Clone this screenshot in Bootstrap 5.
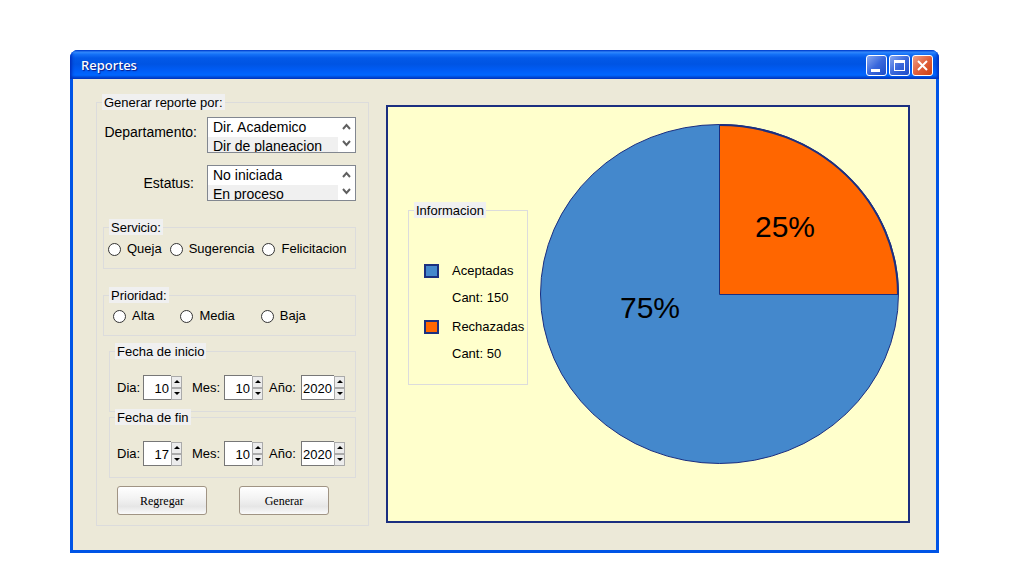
<!DOCTYPE html>
<html lang="es">
<head>
<meta charset="utf-8">
<meta name="viewport" content="width=device-width, initial-scale=1">
<title>Reportes</title>
<link href="https://cdn.jsdelivr.net/npm/bootstrap@5.3.0/dist/css/bootstrap.min.css" rel="stylesheet">
<style>
  body { background: #fff; color: #000; font: 13px/16px "Liberation Sans", Arial, sans-serif; }
  .desk { padding: 50px 79px 29px 70px; }

  .xp-window { background: #0054e6; border-radius: 8px 8px 0 0; overflow: hidden; }
  .xp-title {
    height: 29px; padding: 2px 6px 0 11px;
    background: linear-gradient(#0058e6 0, #3a93ff 2px, #1673f8 4px, #0359e8 8px, #0054e3 14px, #005cf5 20px, #0066ff 25px, #0054e0 27px, #0040c0 29px);
    box-shadow: inset 2px 0 3px #0030c0, inset -2px 0 3px #0030c0;
  }
  .xp-title h1 { padding-bottom: 2px; font: 500 13px/18px "Noto Sans", sans-serif; color: #fff; text-shadow: 1px 1px 1px #0a1883; }
  .xp-controls { gap: 2px; }
  .xp-btn { width: 21px; height: 21px; padding: 0; border: 1px solid #fff; border-radius: 3px; background: linear-gradient(135deg, #88a8f0, #3a68dc 50%, #1c4cc8); }
  .xp-close { background: linear-gradient(135deg, #f0a088, #e0603c 50%, #d04010); }
  .xp-btn svg { display: block; }
  .xp-body { margin: 0 3px 3px; padding: 15px 26px 24px 23px; gap: 17px; background: #ece9d8; }

  .group { min-width: 0; border: 1px solid #dcdcdc; }
  .group > legend { float: none; width: auto; margin: 0 0 0 5px; padding: 2px 2px 0; font-size: 13px; line-height: 14px; background: #f0f0f0; }
  .filters { width: 273px; padding: 7px 0 10px; }
  .filters .group { margin: 0 12px 0 6px; }
  .filters .dates { margin-left: 12px; }
  .filters .service, .filters .priority { margin-top: 18px; }
  .filters .start { margin-top: 7px; }
  .filters .finish { margin-top: -3px; }

  .pick { gap: 10px; margin: 0 12px 12px 6px; font-size: 14px; line-height: 19px; }
  .pick label { width: 94px; padding-bottom: 6px; text-align: right; white-space: nowrap; }
  .pick + .pick { margin-bottom: 0; }
  .pick + .pick label { padding: 0 3px 0 0; }
  .listbox { height: 36px; border: 1px solid #828790; background: #fff; overflow: hidden; }
  .listbox select { height: 40px; border: 0; padding: 0; outline: 0; background: #fff; overflow: hidden; font-size: 14px; scrollbar-width: none; color: #000; }
  .listbox select::-webkit-scrollbar { display: none; }
  .listbox option { min-height: 19px; padding: 1px 5px 0; line-height: 18px; }
  .listbox option:nth-child(even) { background: #f0f0f0; }
  .scroller { width: 17px; }
  .scroller button { height: 17px; padding: 0; border: 0; background: none; line-height: 0; }

  .choices { align-items: flex-start; }
  .choice { gap: 6px; }
  .choice input { appearance: none; width: 13px; height: 13px; margin: 0; border: 1px solid #333; border-radius: 50%; background: #fff; }
  .service .choices { gap: 8px; height: 33px; padding: 6px 0 0 4px; }
  .priority .choices { gap: 26px; height: 32px; padding: 5px 0 0 9px; }

  .dates .fields { padding: 16px 0 11px 7px; }
  .dates label { width: 32px; white-space: nowrap; }
  .dates label:first-child { width: 26px; }
  .spin { height: 25px; margin-right: 6px; }
  .spin.day { margin-right: 10px; }
  .spin input { width: 28px; height: 25px; padding: 2px 2px 0 0; border: 1px solid #777; border-right: 0; border-radius: 0; text-align: right; font-size: 13px; background: #fff; color: #000; }
  .spin.year input { width: 33px; }
  .spin-keys { width: 11px; }
  .spin-keys button { display: flex; align-items: center; justify-content: center; height: 12px; padding: 0; border: 1px solid #aaa; background: #ececec; }

  .actions { gap: 32px; margin: 8px 0 0 20px; }
  .action-btn { width: 90px; height: 29px; padding: 0; border: 1px solid #a09484; border-radius: 3px; background: linear-gradient(#fff, #f2f2f2 45%, #e6e6e6 72%, #fafafa); font: 12px/16px "Liberation Serif", serif; color: #000; }

  .chart-panel { min-width: 0; margin: 11px 0 3px; padding: 17px 9px 0 20px; gap: 12px; border: 2px solid #1b2f80; background: #ffffcc; }
  .info { width: 120px; height: 183px; margin-top: 78px; }
  .keys { padding: 45px 0 0 15px; }
  .key { display: grid; grid-template-columns: 15px auto; column-gap: 13px; row-gap: 11px; align-items: center; margin-bottom: 13px; }
  .key span { grid-column: 2; white-space: nowrap; }
  .key i { width: 15px; height: 14px; border: 2px solid #1b3080; }
  .ok { background: #4488cc; }
  .no { background: #ff6600; }
  .pie { min-width: 0; }
</style>
</head>
<body>
<main class="desk">
  <section class="xp-window">
    <header class="xp-title d-flex align-items-center">
      <h1 class="mb-0 me-auto">Reportes</h1>
      <div class="xp-controls d-flex">
        <button class="xp-btn" type="button" aria-label="Minimizar"><svg width="19" height="19"><path d="M4 13h9v3H4z" fill="#fff"/></svg></button>
        <button class="xp-btn" type="button" aria-label="Maximizar"><svg width="19" height="19"><path d="M4 4h11v11H4zM5 7v7h9V7z" fill="#fff" fill-rule="evenodd"/></svg></button>
        <button class="xp-btn xp-close" type="button" aria-label="Cerrar"><svg width="19" height="19"><path d="M5 5l9 9M14 5l-9 9" stroke="#fff" stroke-width="2"/></svg></button>
      </div>
    </header>

    <div class="xp-body d-flex">
      <form>
      <fieldset class="group filters">
        <legend>Generar reporte por:</legend>

        <div class="pick d-flex align-items-center">
          <label for="dep">Departamento:</label>
          <div class="listbox d-flex flex-fill">
            <select id="dep" size="2" class="flex-fill"><option>Dir. Academico</option><option>Dir de planeacion</option></select>
            <div class="scroller d-flex flex-column">
              <button type="button" aria-label="Subir"><svg width="11" height="9"><path d="M2 7l3.500-4L9 7" fill="none" stroke="#606060" stroke-width="2"/></svg></button>
              <button type="button" aria-label="Bajar"><svg width="11" height="9"><path d="M2 2l3.500 4L9 2" fill="none" stroke="#606060" stroke-width="2"/></svg></button>
            </div>
          </div>
        </div>
        <div class="pick d-flex align-items-center">
          <label for="est">Estatus:</label>
          <div class="listbox d-flex flex-fill">
            <select id="est" size="2" class="flex-fill"><option>No iniciada</option><option>En proceso</option></select>
            <div class="scroller d-flex flex-column">
              <button type="button" aria-label="Subir"><svg width="11" height="9"><path d="M2 7l3.500-4L9 7" fill="none" stroke="#606060" stroke-width="2"/></svg></button>
              <button type="button" aria-label="Bajar"><svg width="11" height="9"><path d="M2 2l3.500 4L9 2" fill="none" stroke="#606060" stroke-width="2"/></svg></button>
            </div>
          </div>
        </div>

        <fieldset class="group service">
          <legend>Servicio:</legend>
          <div class="choices d-flex">
            <label class="choice d-flex align-items-center"><input type="radio" name="servicio">Queja</label>
            <label class="choice d-flex align-items-center"><input type="radio" name="servicio">Sugerencia</label>
            <label class="choice d-flex align-items-center"><input type="radio" name="servicio">Felicitacion</label>
          </div>
        </fieldset>

        <fieldset class="group priority">
          <legend>Prioridad:</legend>
          <div class="choices d-flex">
            <label class="choice d-flex align-items-center"><input type="radio" name="prioridad">Alta</label>
            <label class="choice d-flex align-items-center"><input type="radio" name="prioridad">Media</label>
            <label class="choice d-flex align-items-center"><input type="radio" name="prioridad">Baja</label>
          </div>
        </fieldset>

        <fieldset class="group dates start">
          <legend>Fecha de inicio</legend>
          <div class="fields d-flex align-items-center">
            <label for="d1">Dia:</label>
            <div class="spin day d-flex"><input id="d1" type="text" inputmode="numeric" value="10"><div class="spin-keys d-flex flex-column justify-content-center"><button type="button" aria-label="Más"><svg width="6" height="3"><path d="M0 3l3-3 3 3z"/></svg></button><button type="button" aria-label="Menos"><svg width="6" height="3"><path d="M0 0l3 3 3-3z"/></svg></button></div></div>
            <label for="m1">Mes:</label>
            <div class="spin d-flex"><input id="m1" type="text" inputmode="numeric" value="10"><div class="spin-keys d-flex flex-column justify-content-center"><button type="button" aria-label="Más"><svg width="6" height="3"><path d="M0 3l3-3 3 3z"/></svg></button><button type="button" aria-label="Menos"><svg width="6" height="3"><path d="M0 0l3 3 3-3z"/></svg></button></div></div>
            <label for="a1">Año:</label>
            <div class="spin year d-flex"><input id="a1" type="text" inputmode="numeric" value="2020"><div class="spin-keys d-flex flex-column justify-content-center"><button type="button" aria-label="Más"><svg width="6" height="3"><path d="M0 3l3-3 3 3z"/></svg></button><button type="button" aria-label="Menos"><svg width="6" height="3"><path d="M0 0l3 3 3-3z"/></svg></button></div></div>
          </div>
        </fieldset>

        <fieldset class="group dates finish">
          <legend>Fecha de fin</legend>
          <div class="fields d-flex align-items-center">
            <label for="d2">Dia:</label>
            <div class="spin day d-flex"><input id="d2" type="text" inputmode="numeric" value="17"><div class="spin-keys d-flex flex-column justify-content-center"><button type="button" aria-label="Más"><svg width="6" height="3"><path d="M0 3l3-3 3 3z"/></svg></button><button type="button" aria-label="Menos"><svg width="6" height="3"><path d="M0 0l3 3 3-3z"/></svg></button></div></div>
            <label for="m2">Mes:</label>
            <div class="spin d-flex"><input id="m2" type="text" inputmode="numeric" value="10"><div class="spin-keys d-flex flex-column justify-content-center"><button type="button" aria-label="Más"><svg width="6" height="3"><path d="M0 3l3-3 3 3z"/></svg></button><button type="button" aria-label="Menos"><svg width="6" height="3"><path d="M0 0l3 3 3-3z"/></svg></button></div></div>
            <label for="a2">Año:</label>
            <div class="spin year d-flex"><input id="a2" type="text" inputmode="numeric" value="2020"><div class="spin-keys d-flex flex-column justify-content-center"><button type="button" aria-label="Más"><svg width="6" height="3"><path d="M0 3l3-3 3 3z"/></svg></button><button type="button" aria-label="Menos"><svg width="6" height="3"><path d="M0 0l3 3 3-3z"/></svg></button></div></div>
          </div>
        </fieldset>

        <div class="actions d-flex">
          <button class="action-btn" type="button">Regregar</button>
          <button class="action-btn" type="button">Generar</button>
        </div>
      </fieldset>
      </form>

      <section class="chart-panel d-flex flex-fill align-items-start">
        <fieldset class="group info flex-shrink-0">
          <legend>Informacion</legend>
          <div class="keys">
            <div class="key"><i class="ok"></i><span>Aceptadas</span><span>Cant: 150</span></div>
            <div class="key"><i class="no"></i><span>Rechazadas</span><span>Cant: 50</span></div>
          </div>
        </fieldset>
        <svg class="pie flex-fill" viewBox="0 0 359 340" role="img" aria-label="Aceptadas 75%, rechazadas 25%">
          <ellipse cx="179.500" cy="170" rx="179" ry="169.500" fill="#4488cc" stroke="#1b2f80"/>
          <path d="M179.500 170.500V1A178.500 169.500 0 0 1 358 170.500z" fill="#ff6600"/>
          <path d="M179.500 1A178.500 169.500 0 0 1 358 170.500" fill="none" stroke="#1b2f80" stroke-width="2"/>
          <path d="M179.500 1V170.500H358" fill="none" stroke="#1b2f80"/>
          <text x="215" y="113" font-size="30">25%</text>
          <text x="80" y="194" font-size="30">75%</text>
        </svg>
      </section>
    </div>
  </section>
</main>
<script src="https://cdn.jsdelivr.net/npm/bootstrap@5.3.0/dist/js/bootstrap.bundle.min.js"></script>
</body>
</html>
